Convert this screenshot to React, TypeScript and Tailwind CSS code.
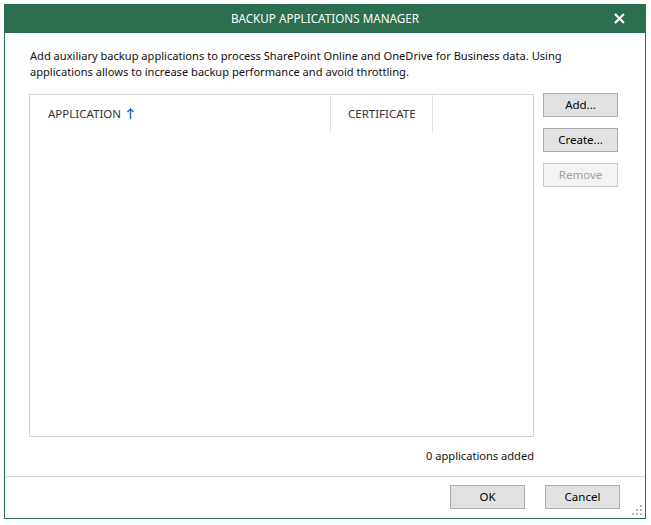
import React from 'react';

const font = { fontFamily: '"Noto Sans", "Open Sans", sans-serif' };

function DlgButton({ label, disabled }: { label: string; disabled?: boolean }) {
  return (
    <button
      disabled={disabled}
      className={
        disabled
          ? 'w-[75px] h-[24px] border border-[#cccccc] bg-[#f4f4f4] text-[11.5px] text-[#a0a0a0]'
          : 'w-[75px] h-[24px] border border-[#adadad] bg-[#e1e1e1] text-[11.5px] text-black'
      }
    >
      {label}
    </button>
  );
}

export default function App() {
  return (
    <div className="w-[651px] h-[525px] bg-white pl-[4px] pt-[4px]" style={font}>
      <div className="relative flex flex-col w-[642px] h-[515px] border-x border-b border-[#2b6e50] bg-white">
        {/* title bar */}
        <div className="relative flex items-center justify-center h-[29px] -mx-px bg-[#2b6e50] text-white text-[11.7px]">
          <span>BACKUP APPLICATIONS MANAGER</span>
          <svg className="absolute right-[21px] top-[9px]" width="11" height="11" viewBox="0 0 11 11">
            <path d="M1 1 L10 10 M10 1 L1 10" stroke="white" strokeWidth="2.2" />
          </svg>
        </div>

        <div className="flex flex-col pl-[24px] pr-[25px]">
          <p className="pt-[15px] pl-px text-[11.1px] leading-[16px] text-[#111]">
            Add auxiliary backup applications to process SharePoint Online and OneDrive for Business data. Using
            <br />
            applications allows to increase backup performance and avoid throttling.
          </p>

          <div className="flex mt-[14px] gap-[9px]">
            <div className="w-[505px] h-[343px] border border-[#d4d4d4]">
              <div className="flex h-[38px] text-[11.5px] text-[#333]">
                <div className="flex items-center w-[301px] pl-[18px] border-r border-[#e3e3e3]">
                  APPLICATION
                  <svg className="ml-[6px] mt-[-2px]" width="7" height="11" viewBox="0 0 7 11">
                    <path d="M3.5 1 L3.5 11 M0.5 4 L3.5 1 L6.5 4" stroke="#1a6fc4" strokeWidth="1.4" fill="none" />
                  </svg>
                </div>
                <div className="flex items-center w-[102px] pl-[17px] border-r border-[#e3e3e3]">CERTIFICATE</div>
              </div>
            </div>
            <div className="flex flex-col gap-[11px] -mt-px">
              <DlgButton label="Add..." />
              <DlgButton label="Create..." />
              <DlgButton label="Remove" disabled />
            </div>
          </div>

          <div className="w-[505px] mt-[11px] text-right text-[11.1px] leading-[16px] text-[#111]">0 applications added</div>
        </div>

        <div className="mt-[12px] h-px bg-[#d6d6d6]" />

        <div className="flex justify-end gap-[20px] pt-[8px] pr-[25px]">
          <DlgButton label="OK" />
          <DlgButton label="Cancel" />
        </div>

        <svg className="absolute right-[2px] bottom-[2px]" width="12" height="12" viewBox="0 0 12 12">
          <rect x="9" y="1" width="2" height="2" fill="#b8b8b8" />
          <rect x="5" y="5" width="2" height="2" fill="#b8b8b8" />
          <rect x="9" y="5" width="2" height="2" fill="#b8b8b8" />
          <rect x="1" y="9" width="2" height="2" fill="#b8b8b8" />
          <rect x="5" y="9" width="2" height="2" fill="#b8b8b8" />
          <rect x="9" y="9" width="2" height="2" fill="#b8b8b8" />
        </svg>
      </div>
    </div>
  );
}
